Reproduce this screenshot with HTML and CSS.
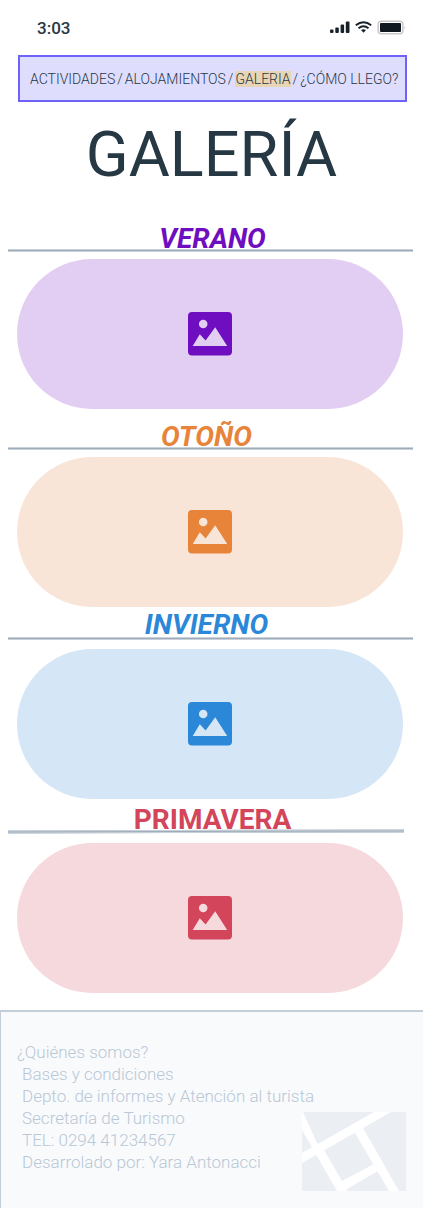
FILE: index.html
```html
<!DOCTYPE html>
<html lang="es">
<head>
<meta charset="utf-8">
<meta name="viewport" content="width=device-width, initial-scale=1">
<title>Galería</title>
<link rel="stylesheet" href="styles.css">
</head>
<body>
<svg class="defs" aria-hidden="true">
  <symbol id="picture" viewBox="0 0 44 44">
    <path fill="currentColor" fill-rule="evenodd" d="M4 0H40A4 4 0 0 1 44 4V39.500A4 4 0 0 1 40 43.500H4A4 4 0 0 1 0 39.500V4A4 4 0 0 1 4 0ZM15.200 7.700A4.300 4.300 0 1 0 15.200 16.300A4.300 4.300 0 1 0 15.200 7.700ZM4.700 34H39.200L27.200 15.300L17.600 28.600L11.800 22.300Z"/>
  </symbol>
</svg>

<header class="status">
  <time class="clock">3:03</time>
  <svg class="indicators" viewBox="0 0 76 14" aria-hidden="true">
    <g fill="#17222b">
      <rect x="0" y="8.500" width="3.500" height="3.500" rx="1"/>
      <rect x="5.300" y="6.500" width="3.500" height="5.500" rx="1"/>
      <rect x="10.600" y="3.500" width="3.500" height="8.500" rx="1"/>
      <rect x="15.800" y="0.500" width="3.700" height="11.500" rx="1"/>
      <path d="M31 9L33.500 11.800L36 9Q33.500 7.300 31 9Z"/>
    </g>
    <g fill="none" stroke="#17222b" stroke-width="2">
      <path d="M25.800 4.200Q33.500 -1.800 41.200 4.200"/>
      <path d="M28.500 7.200Q33.500 3.200 38.500 7.200"/>
    </g>
    <rect x="48.200" y="0.200" width="24.600" height="12.600" rx="3" fill="#fff" stroke="#c9c7c9" stroke-width="1.500"/>
    <rect x="50" y="2" width="21" height="9" rx="1" fill="#0f191f"/>
    <path d="M74.300 4.500Q76 6.500 74.300 8.500Z" fill="#c9c7c9"/>
  </svg>
</header>

<nav class="menu" aria-label="Principal">
  <a href="#actividades">ACTIVIDADES</a>
  <span>/</span>
  <a href="#alojamientos">ALOJAMIENTOS</a>
  <span>/</span>
  <a class="current" href="#galeria" aria-current="page">GALERIA</a>
  <span>/</span>
  <a href="#llegar">¿CÓMO LLEGO?</a>
</nav>

<main>
  <h1 class="title">GALERÍA</h1>

  <section class="season summer">
    <h2 class="name">VERANO</h2>
    <hr class="rule">
    <div class="photo"><svg class="icon" role="img" aria-label="Foto de verano"><use href="#picture"/></svg></div>
  </section>
  <section class="season autumn">
    <h2 class="name">OTOÑO</h2>
    <hr class="rule">
    <div class="photo"><svg class="icon" role="img" aria-label="Foto de otoño"><use href="#picture"/></svg></div>
  </section>
  <section class="season winter">
    <h2 class="name">INVIERNO</h2>
    <hr class="rule">
    <div class="photo"><svg class="icon" role="img" aria-label="Foto de invierno"><use href="#picture"/></svg></div>
  </section>
  <section class="season spring">
    <h2 class="name">PRIMAVERA</h2>
    <hr class="rule">
    <div class="photo"><svg class="icon" role="img" aria-label="Foto de primavera"><use href="#picture"/></svg></div>
  </section>
</main>

<footer class="footer">
  <svg class="map" viewBox="0 0 104 79" role="img" aria-label="Mapa">
    <rect width="104" height="79" fill="#ebeff4"/>
    <g fill="#fff">
      <path d="M0 41L72 0H89L0 51Z"/>
      <path d="M0 0H1L15 31L22 38L40 69L45 79H35L0 18Z"/>
      <path d="M40 69L72 52L76 59L45 77L42 79Z"/>
      <path d="M53 21L61 16L97 79H87Z"/>
    </g>
  </svg>
  <ul class="info">
    <li class="question">¿Quiénes somos?</li>
    <li>Bases y condiciones</li>
    <li>Depto. de informes y Atención al turista</li>
    <li>Secretaría de Turismo</li>
    <li>TEL: 0294 41234567</li>
    <li>Desarrolado por: Yara Antonacci</li>
  </ul>
</footer>
</body>
</html>
```
FILE: styles.css
```css
* {
  box-sizing: border-box;
}

body {
  margin: 0;
  min-height: 100vh;
  display: flex;
  flex-direction: column;
  background: #fff;
  color: #273845;
  font-family: Roboto, "Liberation Sans", sans-serif;
}

.defs {
  position: absolute;
  width: 0;
  height: 0;
}

.status {
  display: flex;
  justify-content: space-between;
  align-items: center;
  height: 55px;
  padding: 0 17px 0 37px;
}

.clock {
  font-size: 17px;
  font-weight: 500;
}

.indicators {
  width: 76px;
  height: 14px;
  overflow: visible;
}

.menu {
  display: flex;
  gap: 2px;
  margin: 0 16px 0 18px;
  padding: 14px 4px 13px 10px;
  border: 2px solid #6f62f8;
  background: #dfddfd;
  font-size: 14px;
  font-weight: 300;
  line-height: 16px;
  white-space: nowrap;
}

.menu a {
  color: inherit;
  text-decoration: none;
}

.menu .current {
  background: #e8d5b5;
}

.title {
  margin: 16px 0 38px;
  font-size: 63px;
  font-weight: 400;
  line-height: 73px;
  text-align: center;
}

.season {
  padding: 0 10px 0 8px;
  margin-bottom: 18px;
}

.name {
  margin: 0;
  padding-left: 4px;
  font-size: 28px;
  font-weight: 700;
  font-style: italic;
  line-height: 20px;
  text-align: center;
}

.rule {
  height: 3px;
  margin: 0 0 7px;
  border: solid #c9d2da;
  border-width: 1px 0;
  background: #9fabb8;
}

.photo {
  display: flex;
  justify-content: center;
  align-items: center;
  height: 150px;
  margin: 0 10px 0 9px;
  border-radius: 75px;
}

.icon {
  width: 44px;
  height: 44px;
}

.summer .name,
.summer .icon {
  color: #6f0dc0;
}

.summer .photo {
  background: #e2cef3;
}

.autumn {
  margin-bottom: 8px;
}

.autumn .name,
.winter .name {
  padding-right: 12px;
}

.autumn .name,
.autumn .icon {
  color: #e88439;
}

.autumn .photo {
  background: #f9e5d8;
}

.winter {
  margin-bottom: 11px;
}

.winter .name,
.winter .icon {
  color: #2b88d9;
}

.winter .rule {
  margin: 2px 0 9px;
}

.winter .photo {
  background: #d5e6f6;
}

.spring {
  margin-bottom: 17px;
}

.spring .name,
.spring .icon {
  color: #d3455b;
}

.spring .name {
  font-style: normal;
}

.spring .rule {
  margin: 0 9px 10px 0;
  transform: rotate(-0.15deg);
}

.spring .photo {
  background: #f6d9dd;
}

.footer {
  flex: 1;
  display: grid;
  align-content: start;
  padding: 29px 17px 16px 16px;
  border: solid #c3ced9;
  border-width: 2px 0 0 1px;
  background: #f8fafc;
}

.info,
.map {
  grid-area: 1 / 1;
}

.info {
  margin: 0;
  padding: 0 0 18px;
  list-style: none;
  color: #b9c8d6;
  font-size: 17px;
  font-weight: 300;
  line-height: 22px;
}

.info li {
  padding-left: 5px;
}

.info .question {
  padding-left: 0;
}

.map {
  width: 104px;
  height: 79px;
  place-self: end;
}
```
